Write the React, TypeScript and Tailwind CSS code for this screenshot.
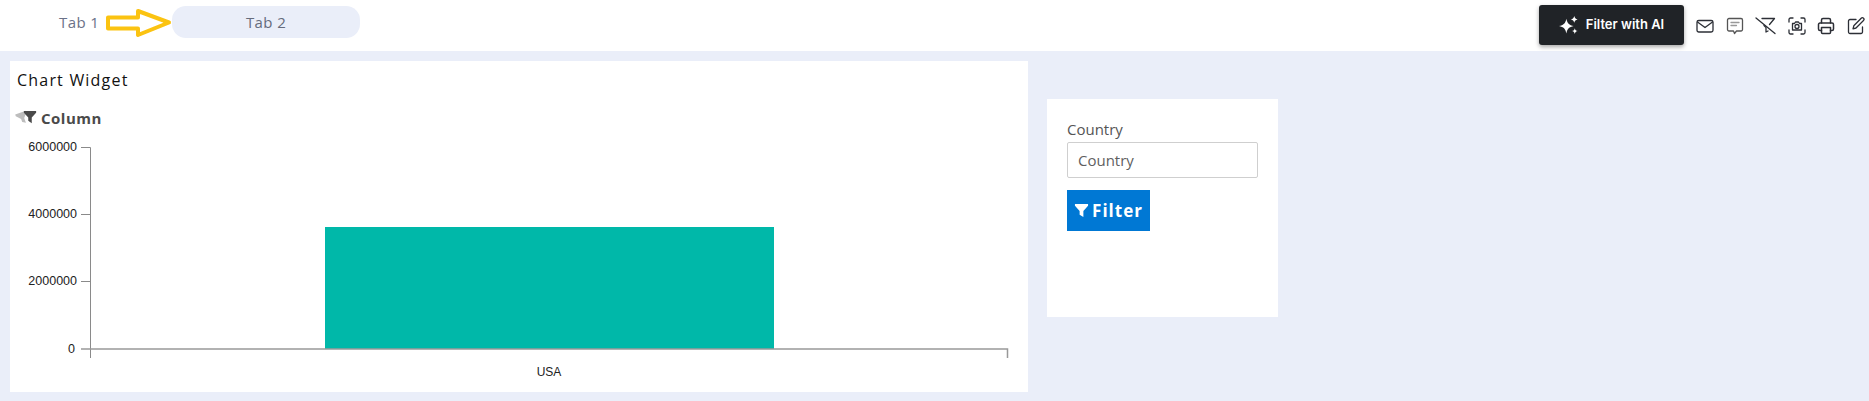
import React from "react";

const FunnelSolid = ({ className }: { className?: string }) => (
  <svg viewBox="0 0 16 16" className={className} fill="currentColor">
    <path d="M1 1h14v2L10 8.600V15l-4-2.600V8.600L1 3z" />
  </svg>
);

const iconProps = {
  width: 18,
  height: 18,
  viewBox: "0 0 18 18",
  fill: "none",
  stroke: "currentColor",
  strokeWidth: 1.3,
  strokeLinecap: "round" as const,
  strokeLinejoin: "round" as const,
};

const MailIcon = () => (
  <svg {...iconProps}>
    <rect x="1" y="3.500" width="16" height="11.500" rx="1.800" />
    <path d="M1.500 5l7.500 5.500L16.500 5" />
  </svg>
);

const CommentIcon = () => (
  <svg {...iconProps} stroke="#555">
    <path d="M3 1.500h12a1.500 1.500 0 0 1 1.500 1.500v9.500a1.500 1.500 0 0 1-1.500 1.500h-4.500L8.500 16.500 7.500 14H3a1.500 1.500 0 0 1-1.500-1.500V3A1.500 1.500 0 0 1 3 1.500z" />
    <path d="M5 5.500h8M5 8.500h5.500" stroke="#999" />
  </svg>
);

const FilterOffIcon = () => (
  <svg width="21" height="18" viewBox="0 0 21 18" fill="none" stroke="currentColor" strokeWidth="1.3" strokeLinecap="round" strokeLinejoin="round">
    <path d="M1 1l19 15.500" />
    <path d="M7 1.500h12.500l-5 6M9 8.500l2 2v4.500l2-1" />
  </svg>
);

const CameraIcon = () => (
  <svg {...iconProps}>
    <path d="M1 5V2.500A1.500 1.500 0 0 1 2.500 1H5M13 1h2.500A1.500 1.500 0 0 1 17 2.500V5M17 13v2.500a1.500 1.500 0 0 1-1.500 1.500H13M5 17H2.500A1.500 1.500 0 0 1 1 15.500V13" />
    <path d="M4.500 6.500h2L7.500 5h3l1 1.500h2v6.500h-9z" />
    <circle cx="9" cy="9.500" r="2" />
  </svg>
);

const PrinterIcon = () => (
  <svg {...iconProps} strokeWidth={1.5}>
    <path d="M4.500 6V3a1.500 1.500 0 0 1 1.500-1.500h6A1.500 1.500 0 0 1 13.500 3v3" />
    <path d="M4.500 13.500H3A1.500 1.500 0 0 1 1.500 12V7.500A1.500 1.500 0 0 1 3 6h12a1.500 1.500 0 0 1 1.500 1.500V12a1.500 1.500 0 0 1-1.500 1.500h-1.500" />
    <path d="M4.500 10.500h9v5a1 1 0 0 1-1 1h-7a1 1 0 0 1-1-1z" />
  </svg>
);

const EditIcon = () => (
  <svg {...iconProps}>
    <path d="M15.500 10v5a1.500 1.500 0 0 1-1.500 1.500H3A1.500 1.500 0 0 1 1.500 15V4A1.500 1.500 0 0 1 3 2.500h6" />
    <path d="M14.200 1.200a1.500 1.500 0 0 1 2.300 2.300L9 11l-3 .800.800-3z" />
  </svg>
);

const StarsIcon = () => (
  <svg width="20" height="19" viewBox="0 0 19 18" fill="white">
    <path d="M7 2.500C8 7 9.500 8.500 14 9.500c-4.500 1-6 2.500-7 7-1-4.500-2.500-6-7-7 4.500-1 6-2.500 7-7z" />
    <path d="M14.500 0c.5 2 1.200 2.700 3.200 3.200-2 .5-2.700 1.200-3.200 3.200-.5-2-1.200-2.700-3.200-3.200 2-.5 2.700-1.200 3.200-3.200z" />
    <path d="M15 11.500c.4 1.700 1 2.300 2.800 2.800-1.800.4-2.400 1-2.800 2.800-.4-1.800-1-2.400-2.800-2.800 1.800-.5 2.400-1.100 2.800-2.800z" />
  </svg>
);

const ChartWidget = () => (
  <div className="w-[1018px] h-[331px] bg-white flex flex-col shrink-0">
    <div className="pl-[7px] pt-[8px] text-[16px] leading-[22px] tracking-[1.2px] text-[#111]">Chart Widget</div>
    <div className="flex items-center pl-[6px] mt-[17px] h-[20px]">
      <div className="relative w-[20px] h-[16px]">
        <FunnelSolid className="absolute left-0 top-[1px] w-[13px] h-[14px] text-[#bdbdbd] -rotate-[20deg]" />
        <FunnelSolid className="absolute left-[7px] top-0 w-[14px] h-[14px] text-[#4a4a4a]" />
      </div>
      <span className="ml-[5px] text-[15px] font-bold tracking-[0.5px] text-[#4a4a4a]">Column</span>
    </div>
    <svg width="1018" height="240" className="mt-[13px] block" fontFamily="'Liberation Sans', sans-serif" fontSize="12.5" fill="#222">
      <path d="M71 6.500h9.500V217M71 73.500h9.500M71 140.500h9.500" fill="none" stroke="#8a8a8a" />
      <rect x="315" y="86" width="449" height="122" fill="#00b8a9" />
      <path d="M71 208H997.500V217" fill="none" stroke="#999" strokeWidth="1.500" />
      <text x="67" y="10" textAnchor="end">6000000</text>
      <text x="67" y="77" textAnchor="end">4000000</text>
      <text x="67" y="144" textAnchor="end">2000000</text>
      <text x="65" y="212" textAnchor="end">0</text>
      <text x="539" y="235" textAnchor="middle" fontSize="12">USA</text>
    </svg>
  </div>
);

const FilterCard = () => (
  <div className="w-[231px] h-[218px] bg-white ml-[19px] mt-[38px] px-[20px] pt-[20px] shrink-0">
    <label className="block text-[15px] leading-[20px] text-[#555]">Country</label>
    <input
      readOnly
      placeholder="Country"
      className="block w-[191px] h-[36px] mt-[3px] px-[10px] text-[15px] border border-[#cfcfcf] rounded-[2px] bg-white placeholder:text-[#5f5f5f] outline-none"
    />
    <button className="mt-[12px] w-[83px] h-[41px] bg-[#0078d4] text-white flex items-center justify-center gap-[3px] text-[17px] font-bold tracking-[1px]">
      <FunnelSolid className="w-[15px] h-[15px]" />
      Filter
    </button>
  </div>
);

export default function App() {
  return (
    <div className="w-[1869px] h-[401px] bg-[#eaeef9] overflow-hidden font-['Open_Sans',sans-serif]">
      <div className="h-[51px] bg-white flex items-start">
        <div className="ml-[59px] mt-[6px] w-[40px] h-[32px] flex items-center text-[15px] tracking-[0.4px] text-[#6b7288] whitespace-nowrap">Tab 1</div>
        <svg width="66" height="32" viewBox="0 0 66 32" className="ml-[7px] mt-[7px]">
          <path d="M2 10.500h30V4l31 11.500L32 28v-6.500H2z" fill="none" stroke="#fbc311" strokeWidth="4" strokeLinejoin="round" />
        </svg>
        <div className="mt-[6px] w-[188px] h-[32px] rounded-[14px] bg-[#eaeef9] flex items-center justify-center text-[15px] tracking-[0.4px] text-[#666c7c]">Tab 2</div>
        <div className="ml-auto mr-[4.5px] mt-[5px] flex items-center">
          <button className="w-[145px] h-[40px] rounded-[3px] bg-[#202327] text-white shadow-[0_2px_4px_rgba(0,0,0,0.35)] flex items-center justify-center gap-[7px] text-[13px] font-['Inter',sans-serif] font-semibold">
            <StarsIcon />
            Filter with AI
          </button>
          <div className="ml-[12px] flex items-center gap-[11.5px] text-[#2c2f36] mt-[2px]">
            <MailIcon />
            <CommentIcon />
            <FilterOffIcon />
            <CameraIcon />
            <PrinterIcon />
            <EditIcon />
          </div>
        </div>
      </div>
      <div className="flex pl-[10px] pt-[10px] items-start">
        <ChartWidget />
        <FilterCard />
      </div>
    </div>
  );
}
